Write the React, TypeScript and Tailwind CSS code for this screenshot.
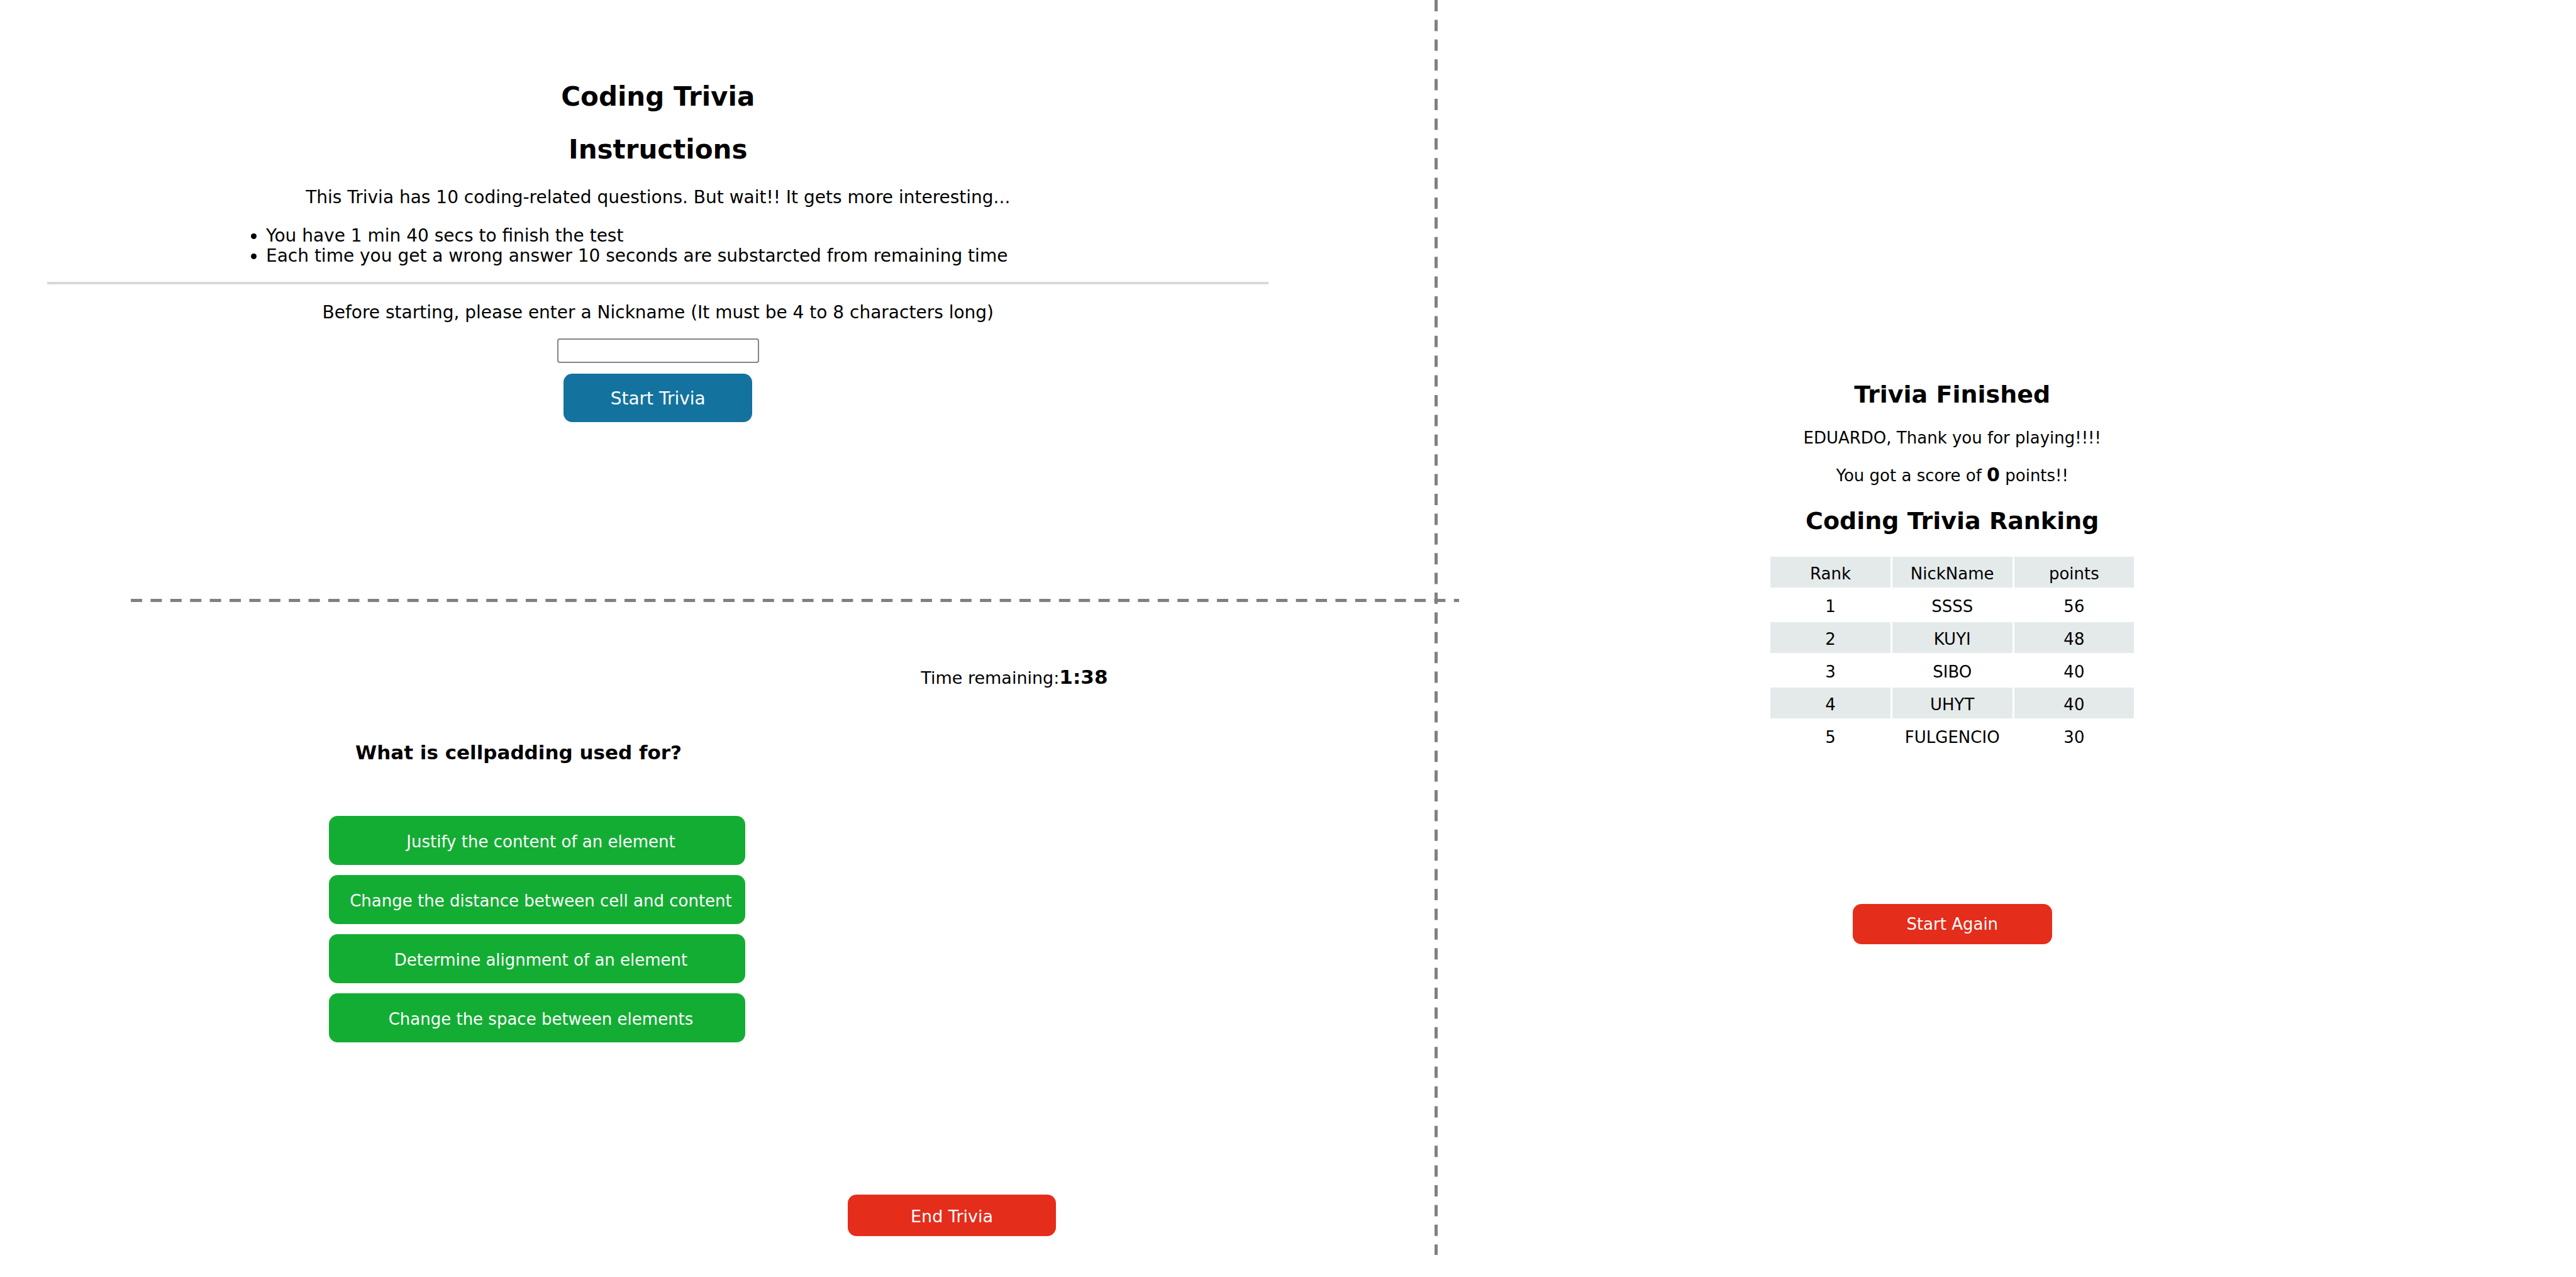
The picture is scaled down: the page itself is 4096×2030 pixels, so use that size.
const options = [
  'Justify the content of an element',
  'Change the distance between cell and content',
  'Determine alignment of an element',
  'Change the space between elements',
];

const ranking = [
  { name: 'SSSS', points: 56 },
  { name: 'KUYI', points: 48 },
  { name: 'SIBO', points: 40 },
  { name: 'UHYT', points: 40 },
  { name: 'FULGENCIO', points: 30 },
];

function StartScreen() {
  return (
    <section className="mr-[264px] ml-[75px] flex flex-col items-center pt-[130px] pb-[281px] text-[28px] leading-[32px]">
      <h1 className="text-[42px] leading-[48px] font-bold">Coding Trivia</h1>
      <h2 className="mt-[36px] text-[42px] leading-[48px] font-bold">Instructions</h2>
      <p className="mt-[36px]">
        This Trivia has 10 coding-related questions. But wait!! It gets more interesting...
      </p>
      <ul className="mt-[29px] list-disc self-start pl-[348px]">
        <li>You have 1 min 40 secs to finish the test</li>
        <li>Each time you get a wrong answer 10 seconds are substarcted from remaining time</li>
      </ul>
      <hr className="mt-[25px] h-[4px] w-full border-0 bg-[#d8d8d8]" />
      <label htmlFor="nickname" className="mt-[29px]">
        Before starting, please enter a Nickname (It must be 4 to 8 characters long)
      </label>
      <input
        id="nickname"
        type="text"
        minLength={4}
        maxLength={8}
        className="mt-[25px] h-[39px] w-[321px] rounded-[4px] border-2 border-[#858585] bg-white px-2 text-[24px]"
      />
      <button
        type="button"
        className="mt-[17px] h-[77px] w-[300px] rounded-[14px] bg-[#13739e] pt-[3px] text-white"
      >
        Start Trivia
      </button>
    </section>
  );
}

function QuestionScreen() {
  return (
    <section className="mr-[264px] ml-[75px] flex flex-col items-start pt-[99px] text-[26px] leading-[40px]">
      <p className="mr-[256px] self-end text-[27px]">
        Time remaining:<strong className="text-[31px]">1:38</strong>
      </p>
      <h2 className="mt-[78px] ml-[490px] text-[31px] font-bold">What is cellpadding used for?</h2>
      <div className="mt-[81px] ml-[448px] flex w-[662px] flex-col gap-[16px]">
        {options.map((text) => (
          <button
            key={text}
            type="button"
            className="h-[78px] rounded-[14px] bg-[#14ad34] pt-[4px] pl-[12px] whitespace-nowrap text-white"
          >
            {text}
          </button>
        ))}
      </div>
      <button
        type="button"
        className="mt-[242px] ml-[1273px] h-[66px] w-[331px] rounded-[14px] bg-[#e52d1b] pt-[4px] text-[27px] text-white"
      >
        End Trivia
      </button>
    </section>
  );
}

function ResultScreen() {
  return (
    <section className="flex flex-1 flex-col items-center pt-[605px] pr-[174px] text-[26px] leading-[32px]">
      <h2 className="text-[38px] leading-[44px] font-bold">Trivia Finished</h2>
      <p className="mt-[31px]">EDUARDO, Thank you for playing!!!!</p>
      <p className="mt-[27px]">
        You got a score of <strong className="text-[30px]">0</strong> points!!
      </p>
      <h2 className="mt-[34px] text-[38px] leading-[44px] font-bold">Coding Trivia Ranking</h2>
      <table className="mt-[32px] w-[584px] table-fixed border-separate border-spacing-[3px] text-center">
        <thead>
          <tr className="h-[49px] bg-[#e4eaea]">
            <th className="p-0 pt-[4px] font-normal">Rank</th>
            <th className="p-0 pt-[4px] font-normal">NickName</th>
            <th className="p-0 pt-[4px] font-normal">points</th>
          </tr>
        </thead>
        <tbody>
          {ranking.map((row, i) => (
            <tr key={row.name} className="h-[49px] even:bg-[#e4eaea]">
              <td className="p-0 pt-[4px]">{i + 1}</td>
              <td className="p-0 pt-[4px]">{row.name}</td>
              <td className="p-0 pt-[4px]">{row.points}</td>
            </tr>
          ))}
        </tbody>
      </table>
      <button
        type="button"
        className="mt-[240px] h-[64px] w-[317px] rounded-[14px] bg-[#e52d1b] text-white"
      >
        Start Again
      </button>
    </section>
  );
}

export default function App() {
  return (
    <main className="flex min-h-screen bg-white font-['DejaVu_Sans',Verdana,sans-serif] text-black">
      <div className="w-[55.7%] flex-none">
        <StartScreen />
        <div className="-mr-[39px] ml-[208px] h-[5px]">
          <svg className="block h-full w-full" aria-hidden="true">
            <line x1="0" y1="2.5" x2="100%" y2="2.5" stroke="#808080" strokeWidth="5" strokeDasharray="18 13.4" />
          </svg>
        </div>
        <QuestionScreen />
      </div>
      <div className="relative mb-[35px] w-[5px] flex-none">
        <svg className="absolute inset-0 h-full w-full" aria-hidden="true">
          <line x1="2.5" y1="0" x2="2.5" y2="100%" stroke="#808080" strokeWidth="5" strokeDasharray="18 13.4" />
        </svg>
      </div>
      <ResultScreen />
    </main>
  );
}
